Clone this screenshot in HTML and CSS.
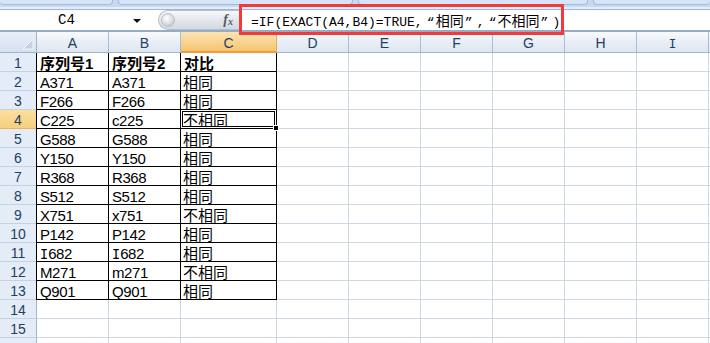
FILE: index.html
```html
<!DOCTYPE html>
<html lang="zh">
<head>
<meta charset="utf-8">
<title>Excel EXACT</title>
<link rel="stylesheet" href="styles.css">
</head>
<body>
<div class="app">
  <div class="ribbon">
    <div class="tab tab-1"></div>
    <div class="tab tab-2"></div>
    <div class="tab tab-3"></div>
    <div class="tab tab-4"></div>
  </div>
  <div class="fbar">
    <div class="namebox"><span class="ref">C4</span><span class="caret"></span></div>
    <div class="fx-pill"><span class="knob"></span><span class="fx">f<sub>x</sub></span></div>
    <div class="formula"><span class="ftext">=IF(EXACT(A4,B4)=TRUE,<span class="q q-open">“</span><span class="fz">相同</span><span class="q q-close">”</span>,<span class="q q-open">“</span><span class="fz">不相同</span><span class="q q-close">”</span>)</span><div class="mark"></div></div>
  </div>
  <div class="sheet">
    <div class="corner"><svg width="12" height="12" viewBox="0 0 12 12"><polygon points="11,1 11,11 1,11" fill="#c3d1e3" stroke="#f4f7fb" stroke-width="1"/></svg></div>
    <div class="ch">A</div><div class="ch">B</div><div class="ch ch-sel">C</div><div class="ch">D</div><div class="ch">E</div><div class="ch">F</div><div class="ch">G</div><div class="ch">H</div><div class="ch"><span class="si">I</span></div><div class="ch ch-end"></div>

    <div class="rh">1</div><div class="c t ta th">序列号1</div><div class="c t th">序列号2</div><div class="c t th">对比</div><div class="c"></div><div class="c"></div><div class="c"></div><div class="c"></div><div class="c"></div><div class="c"></div><div class="c"></div>
    <div class="rh">2</div><div class="c t ta">A371</div><div class="c t">A371</div><div class="c t zh">相同</div><div class="c"></div><div class="c"></div><div class="c"></div><div class="c"></div><div class="c"></div><div class="c"></div><div class="c"></div>
    <div class="rh">3</div><div class="c t ta">F266</div><div class="c t">F266</div><div class="c t zh">相同</div><div class="c"></div><div class="c"></div><div class="c"></div><div class="c"></div><div class="c"></div><div class="c"></div><div class="c"></div>
    <div class="rh rh-sel">4</div><div class="c t ta">C225</div><div class="c t">c225</div><div class="c t zh active">不相同<span class="sel"><span class="handle"></span></span></div><div class="c"></div><div class="c"></div><div class="c"></div><div class="c"></div><div class="c"></div><div class="c"></div><div class="c"></div>
    <div class="rh">5</div><div class="c t ta">G588</div><div class="c t">G588</div><div class="c t zh">相同</div><div class="c"></div><div class="c"></div><div class="c"></div><div class="c"></div><div class="c"></div><div class="c"></div><div class="c"></div>
    <div class="rh">6</div><div class="c t ta">Y150</div><div class="c t">Y150</div><div class="c t zh">相同</div><div class="c"></div><div class="c"></div><div class="c"></div><div class="c"></div><div class="c"></div><div class="c"></div><div class="c"></div>
    <div class="rh">7</div><div class="c t ta">R368</div><div class="c t">R368</div><div class="c t zh">相同</div><div class="c"></div><div class="c"></div><div class="c"></div><div class="c"></div><div class="c"></div><div class="c"></div><div class="c"></div>
    <div class="rh">8</div><div class="c t ta">S512</div><div class="c t">S512</div><div class="c t zh">相同</div><div class="c"></div><div class="c"></div><div class="c"></div><div class="c"></div><div class="c"></div><div class="c"></div><div class="c"></div>
    <div class="rh">9</div><div class="c t ta">X751</div><div class="c t">x751</div><div class="c t zh">不相同</div><div class="c"></div><div class="c"></div><div class="c"></div><div class="c"></div><div class="c"></div><div class="c"></div><div class="c"></div>
    <div class="rh">10</div><div class="c t ta">P142</div><div class="c t">P142</div><div class="c t zh">相同</div><div class="c"></div><div class="c"></div><div class="c"></div><div class="c"></div><div class="c"></div><div class="c"></div><div class="c"></div>
    <div class="rh">11</div><div class="c t ta"><span class="si">I</span>682</div><div class="c t"><span class="si">I</span>682</div><div class="c t zh">相同</div><div class="c"></div><div class="c"></div><div class="c"></div><div class="c"></div><div class="c"></div><div class="c"></div><div class="c"></div>
    <div class="rh">12</div><div class="c t ta">M271</div><div class="c t">m271</div><div class="c t zh">不相同</div><div class="c"></div><div class="c"></div><div class="c"></div><div class="c"></div><div class="c"></div><div class="c"></div><div class="c"></div>
    <div class="rh">13</div><div class="c t ta">Q901</div><div class="c t">Q901</div><div class="c t zh">相同</div><div class="c"></div><div class="c"></div><div class="c"></div><div class="c"></div><div class="c"></div><div class="c"></div><div class="c"></div>
    <div class="rh">14</div><div class="c"></div><div class="c"></div><div class="c"></div><div class="c"></div><div class="c"></div><div class="c"></div><div class="c"></div><div class="c"></div><div class="c"></div><div class="c"></div>
    <div class="rh">15</div><div class="c"></div><div class="c"></div><div class="c"></div><div class="c"></div><div class="c"></div><div class="c"></div><div class="c"></div><div class="c"></div><div class="c"></div><div class="c"></div>
    <div class="rh">16</div><div class="c"></div><div class="c"></div><div class="c"></div><div class="c"></div><div class="c"></div><div class="c"></div><div class="c"></div><div class="c"></div><div class="c"></div><div class="c"></div>
  </div>
</div>
</body>
</html>
```

FILE: styles.css
```css
* { box-sizing: border-box; }
html, body {
  margin: 0;
  padding: 0;
  width: 710px;
  height: 343px;
  overflow: hidden;
  background: #ffffff;
}
.app {
  width: 710px;
  height: 343px;
  overflow: hidden;
  font-family: "Liberation Sans", "Noto Sans CJK SC", sans-serif;
}

/* top ribbon edge */
.ribbon {
  height: 10px;
  background: #c6d9f0;
  border-bottom: 1px solid #9fb7d5;
  display: flex;
  align-items: flex-start;
  gap: 5px;
  box-shadow: inset 0 -2px 0 #e4eefa;
}
.tab {
  height: 5px;
  background: #d6e4f5;
  border: 1px solid #a3bbd8;
  border-top: none;
  border-radius: 0 0 4px 4px;
}
.tab-1 { width: 113px; border-left: none; }
.tab-2 { width: 235px; }
.tab-3 { width: 230px; }
.tab-4 { flex: 1; border-right: none; }

/* formula bar */
.fbar {
  height: 22px;
  display: flex;
  background: #ffffff;
  border-bottom: 2px solid #97abc3;
  box-shadow: 0 1px 0 #dfe7f1;
}
.namebox {
  width: 155px;
  display: flex;
  align-items: center;
  position: relative;
  padding-right: 14px;
}
.ref {
  flex: 1;
  text-align: center;
  font-family: "Liberation Mono", monospace;
  font-size: 14px;
  color: #000;
}
.caret {
  width: 0;
  height: 0;
  border-left: 4px solid transparent;
  border-right: 4px solid transparent;
  border-top: 4px solid #111;
  margin-top: 2px;
}
.fx-pill {
  width: 81px;
  height: 20px;
  margin-left: 3px;
  border-radius: 10px 0 0 10px;
  background: linear-gradient(#f7f8fa, #e3e7ec 50%, #d3d9e0);
  border: 1px solid #b3bfcd;
  border-right: none;
  display: flex;
  align-items: center;
  justify-content: space-between;
  padding: 0 6px 0 2px;
}
.knob {
  width: 14px;
  height: 14px;
  border-radius: 50%;
  background: radial-gradient(circle at 40% 35%, #ffffff, #d8dde3 55%, #aab3be);
  border: 1px solid #b8c1cc;
}
.fx {
  font-family: "Liberation Serif", serif;
  font-style: italic;
  font-weight: bold;
  font-size: 14px;
  color: #555b63;
  line-height: 1;
}
.fx sub {
  font-size: 10px;
  vertical-align: -1px;
}
.formula {
  flex: 1;
  position: relative;
  display: flex;
  align-items: center;
  padding-left: 11px;
  border-left: 1px solid #c9d3df;
}
.ftext {
  font-family: "Liberation Mono", "Noto Sans CJK SC", monospace;
  font-size: 13px;
  color: #000;
  white-space: nowrap;
}
.fz {
  font-family: "Noto Sans CJK SC", sans-serif;
  font-size: 14px;
}
.q {
  display: inline-block;
  width: 13px;
}
.q-open { text-align: right; padding-right: 1px; }
.q-close { text-align: left; padding-left: 1px; }
.mark {
  position: absolute;
  left: -1px;
  top: -6px;
  width: 325px;
  height: 31px;
  border: 3px solid #f23a3c;
}

/* serif capital I, as in the reference's UI font */
.si {
  font-family: "DejaVu Sans Mono", monospace;
  font-size: 0.9em;
  letter-spacing: 0;
}

/* sheet */
.sheet {
  display: grid;
  grid-template-columns: 37px 72px 72px 96px repeat(6, 72px) 1fr;
  grid-template-rows: 21px;
  grid-auto-rows: 19px;
}
.corner {
  background: linear-gradient(#e7eef7, #d6e1ee);
  border-right: 1px solid #9eb6ce;
  border-bottom: 1px solid #9eb6ce;
  display: flex;
  align-items: flex-end;
  justify-content: flex-end;
  padding: 0 2px 2px 0;
}
.corner svg { display: block; }
.ch {
  background: linear-gradient(#f8fafd, #e8eef6 55%, #dfe6f0);
  border-right: 1px solid #a8bdd3;
  border-bottom: 1px solid #9eb6ce;
  text-align: center;
  font-size: 14px;
  line-height: 20px;
  padding-top: 1px;
  color: #233e62;
}
.ch-sel {
  background: linear-gradient(#fbe3b3, #f8d38e 55%, #f4c56f);
  border-bottom: 2px solid #f29a3c;
  border-right-color: #e9a95a;
}
.ch-end { border-right: none; }
.rh {
  background: #e4ecf7;
  border-right: 1px solid #9eb6ce;
  border-bottom: 1px solid #c4d2e3;
  text-align: center;
  font-size: 14px;
  line-height: 15px;
  padding-top: 3px;
  color: #233e62;
}
.rh-sel {
  background: linear-gradient(#fadf9f, #f7cf7f);
  border-bottom-color: #f0b35a;
}
.c {
  border-right: 1px solid #d0d7e5;
  border-bottom: 1px solid #d0d7e5;
  font-size: 15px;
  letter-spacing: -0.4px;
  line-height: 15px;
  padding: 3px 0 0 3px;
  white-space: nowrap;
  color: #000;
}
.c.t {
  border-right-color: #000;
  border-bottom-color: #000;
}
.c.ta { box-shadow: -1px 0 0 #000; }
.c.th { font-weight: bold; letter-spacing: 0; padding-left: 3px; }
.c.zh { letter-spacing: 0; padding-left: 2px; }
.active { position: relative; }
.sel {
  position: absolute;
  left: -1px;
  top: -1px;
  right: -1px;
  bottom: -1px;
  border: 1px solid #000;
  box-shadow: inset 0 0 0 1px #fff, inset 0 0 0 2px #000;
}
.handle {
  position: absolute;
  right: -3px;
  bottom: -3px;
  width: 6px;
  height: 6px;
  background: #000;
  border: 1px solid #fff;
}
```
